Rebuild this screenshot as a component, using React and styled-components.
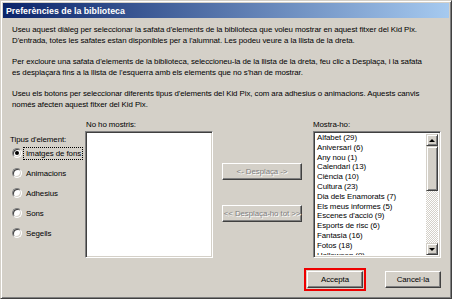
import React from 'react';
import styled, { createGlobalStyle } from 'styled-components';

const GlobalStyle = createGlobalStyle`
  html, body {
    margin: 0;
    padding: 0;
    background: #D4D0C8;
  }
  * {
    box-sizing: border-box;
  }
`;

const Window = styled.div`
  width: 452px;
  height: 299px;
  background: #D4D0C8;
  border: 1px solid;
  border-color: #D4D0C8 #404040 #404040 #D4D0C8;
  box-shadow: inset 1px 1px #fff, inset -1px -1px #808080;
  padding: 2px;
  font-family: "Liberation Sans", Arial, sans-serif;
  font-size: 7.9px;
  letter-spacing: -0.07px;
  color: #000;
  display: flex;
  flex-direction: column;
`;

const TitleBar = styled.div`
  height: 15px;
  display: flex;
  align-items: center;
  padding-left: 3px;
  background: linear-gradient(to right, #0A246A, #A6CAF0);
  color: #fff;
  font-weight: bold;
  font-size: 8.8px;
  letter-spacing: 0;
`;

const Content = styled.div`
  flex: 1;
  display: flex;
  flex-direction: column;
  padding: 6px 7px 0 9px;
`;

const Para = styled.p`
  margin: 0 0 10px;
  line-height: 11px;
  white-space: nowrap;
`;

const Main = styled.div`
  display: flex;
  margin-top: -1px;
`;

const TypeColumn = styled.div`
  width: 75px;
  margin-left: -2px;
  padding-top: 15px;
  display: flex;
  flex-direction: column;
  white-space: nowrap;
`;

const Label = styled.div`
  height: 12px;
  line-height: 11px;
  white-space: nowrap;
  padding-left: ${p => p.$indent || 0}px;
`;

const RadioGroup = styled.div`
  display: flex;
  flex-direction: column;
  gap: 6px;
  padding-left: 2px;
`;

const RadioRow = styled.div`
  height: 14px;
  display: flex;
  align-items: center;
  gap: 2px;
`;

const RadioCircle = styled.span`
  width: 10px;
  height: 10px;
  flex-shrink: 0;
  border-radius: 50%;
  background: #fff;
  border: 1px solid;
  border-color: #808080 #fff #fff #808080;
  box-shadow: inset 1px 1px #404040, inset -1px -1px #D4D0C8;
  display: flex;
  align-items: center;
  justify-content: center;

  &::after {
    content: '';
    width: 4px;
    height: 4px;
    border-radius: 50%;
    background: ${p => (p.$checked ? '#000' : 'transparent')};
  }
`;

const RadioText = styled.span`
  padding: 0 1px 0 2px;
  line-height: 11px;
  outline: ${p => (p.$focused ? '1px dotted #000' : 'none')};
`;

const ListColumn = styled.div`
  width: 128px;
  display: flex;
  flex-direction: column;
  margin-left: ${p => p.$gap || 0}px;
`;

const ListBox = styled.div`
  height: 127px;
  background: #fff;
  border: 1px solid;
  border-color: #808080 #fff #fff #808080;
  box-shadow: inset 1px 1px #404040, inset -1px -1px #D4D0C8;
  padding: 2px;
  display: flex;
  overflow: hidden;
`;

const Items = styled.div`
  flex: 1;
  padding-left: 1px;
  margin-top: -1px;
  overflow: hidden;
`;

const Item = styled.div`
  line-height: 9.8px;
  white-space: nowrap;
`;

const ScrollBar = styled.div`
  width: 12px;
  display: flex;
  flex-direction: column;
  background-color: #fff;
  background-image: repeating-conic-gradient(#D4D0C8 0 25%, #fff 0 50%);
  background-size: 2px 2px;
`;

const ScrollPart = styled.div`
  height: ${p => p.$h}px;
  background: #D4D0C8;
  border: 1px solid;
  border-color: #D4D0C8 #404040 #404040 #D4D0C8;
  box-shadow: inset 1px 1px #fff, inset -1px -1px #808080;
  display: flex;
  align-items: center;
  justify-content: center;
  margin-bottom: ${p => (p.$push ? 'auto' : '0')};
`;

const Arrow = styled.span`
  width: 0;
  height: 0;
  border-left: 3px solid transparent;
  border-right: 3px solid transparent;
  ${p => (p.$down
    ? 'border-top: 3px solid #000;'
    : 'border-bottom: 3px solid #000;')}
`;

const MoveColumn = styled.div`
  width: 80px;
  margin-left: 9px;
  padding-top: 44px;
  display: flex;
  flex-direction: column;
  gap: 25px;
`;

const Button = styled.button`
  width: ${p => p.$w || 56}px;
  height: 17px;
  padding: 0;
  font-family: inherit;
  font-size: 7.9px;
  letter-spacing: inherit;
  background: #D4D0C8;
  border: 1px solid;
  border-color: #fff #404040 #404040 #fff;
  box-shadow: inset -1px -1px #808080;
  color: ${p => (p.disabled ? '#808080' : '#000')};
  text-shadow: ${p => (p.disabled ? '1px 1px #fff' : 'none')};
  white-space: nowrap;
  outline: ${p => (p.$highlight ? '2px solid #E00' : 'none')};
  outline-offset: 1px;
`;

const Footer = styled.div`
  display: flex;
  justify-content: flex-end;
  gap: 22px;
  margin-top: 13px;
  padding-right: 1px;
`;

const types = ['Imatges de fons', 'Animacions', 'Adhesius', 'Sons', 'Segells'];

const shown = [
  'Alfabet (29)',
  'Aniversari (6)',
  'Any nou (1)',
  'Calendari (13)',
  'Ciència (10)',
  'Cultura (23)',
  'Dia dels Enamorats (7)',
  'Els meus informes (5)',
  "Escenes d'acció (9)",
  'Esports de risc (6)',
  'Fantasia (16)',
  'Fotos (18)',
  'Halloween (9)',
];

const App = () => (
  <>
    <GlobalStyle />
    <Window>
      <TitleBar>Preferències de la biblioteca</TitleBar>
      <Content>
        <Para>
          Useu aquest diàleg per seleccionar la safata d'elements de la biblioteca que voleu mostrar en aquest fitxer del Kid Pix.
          <br />
          D'entrada, totes les safates estan disponibles per a l'alumnat. Les podeu veure a la llista de la dreta.
        </Para>
        <Para>
          Per excloure una safata d'elements de la biblioteca, seleccioneu-la de la llista de la dreta, feu clic a Desplaça, i la safata
          <br />
          es desplaçarà fins a la llista de l'esquerra amb els elements que no s'han de mostrar.
        </Para>
        <Para>
          Useu els botons per seleccionar diferents tipus d'elements del Kid Pix, com ara adhesius o animacions. Aquests canvis
          <br />
          només afecten aquest fitxer del Kid Pix.
        </Para>

        <Main>
          <TypeColumn>
            <Label>Tipus d'element:</Label>
            <RadioGroup>
              {types.map((t, i) => (
                <RadioRow key={t}>
                  <RadioCircle $checked={i === 0} />
                  <RadioText $focused={i === 0}>{t}</RadioText>
                </RadioRow>
              ))}
            </RadioGroup>
          </TypeColumn>

          <ListColumn>
            <Label $indent={1}>No ho mostris:</Label>
            <ListBox />
          </ListColumn>

          <MoveColumn>
            <Button $w={80} disabled>&lt;- Desplaça -&gt;</Button>
            <Button $w={80} disabled>&lt;&lt; Desplaça-ho tot &gt;&gt;</Button>
          </MoveColumn>

          <ListColumn $gap={11}>
            <Label>Mostra-ho:</Label>
            <ListBox>
              <Items>
                {shown.map(s => (
                  <Item key={s}>{s}</Item>
                ))}
              </Items>
              <ScrollBar>
                <ScrollPart $h={12}><Arrow /></ScrollPart>
                <ScrollPart $h={45} $push />
                <ScrollPart $h={12}><Arrow $down /></ScrollPart>
              </ScrollBar>
            </ListBox>
          </ListColumn>
        </Main>

        <Footer>
          <Button $highlight>Accepta</Button>
          <Button>Cancel·la</Button>
        </Footer>
      </Content>
    </Window>
  </>
);

export default App;
